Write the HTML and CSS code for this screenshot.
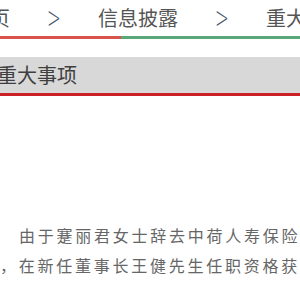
FILE: index.html
```
<!DOCTYPE html>
<html>
<head>
<meta charset="utf-8">
<link rel="stylesheet" href="styles.css">
</head>
<body>
<div class="crumbs">
  <div class="crumb-row">
    <span class="crumb">首页</span>
    <span class="sep">&gt;</span>
    <span class="crumb">信息披露</span>
    <span class="sep">&gt;</span>
    <span class="crumb">重大事项</span>
  </div>
  <div class="crumb-line"><span class="red"></span><span class="green"></span></div>
</div>
<div class="title-bar"><span class="title">重大事项</span></div>
<div class="content">
  <p class="para"><span class="indent">由于蹇丽君女士辞去中荷人寿保险有限公司董事长职务</span><br>，在新任董事长王健先生任职资格获得批准之前</p>
</div>
</body>
</html>
```
FILE: styles.css
```
html, body {
  margin: 0;
  padding: 0;
  background: #fff;
  overflow: hidden;
}
body {
  width: 300px;
  height: 300px;
  font-family: "Noto Sans CJK SC", "Noto Sans", sans-serif;
}
.crumbs {
  width: 300px;
}
.crumb-row {
  display: flex;
  align-items: center;
  height: 36px;
  margin-left: -30px;
  gap: 39px;
  white-space: nowrap;
  color: #555;
  font-size: 20px;
  line-height: 36px;
}
.crumb, .sep {
  flex: none;
}
.sep {
  width: 10px;
  display: flex;
  justify-content: center;
  font-family: "DejaVu Sans", sans-serif;
  font-size: 30px;
  font-weight: 200;
  color: #4a5a70;
  transform: scaleX(0.55);
}
.crumb-line {
  display: flex;
  height: 3px;
}
.crumb-line .red {
  width: 121px;
  background: #d9534f;
}
.crumb-line .green {
  flex: 1;
  background: #5aa77a;
}
.title-bar {
  margin-top: 18px;
  height: 36px;
  background: #d8d8d8;
  border-bottom: 3px solid #cc1f27;
  display: flex;
  align-items: center;
  white-space: nowrap;
}
.title {
  margin-left: -3px;
  font-size: 20px;
  color: #3f3f3f;
  line-height: 36px;
}
.content {
  padding-top: 124px;
}
.para {
  margin: 0;
  font-size: 16px;
  line-height: 30px;
  color: #666;
  letter-spacing: 2.75px;
  white-space: nowrap;
}
.indent {
  padding-left: 19px;
}
```
